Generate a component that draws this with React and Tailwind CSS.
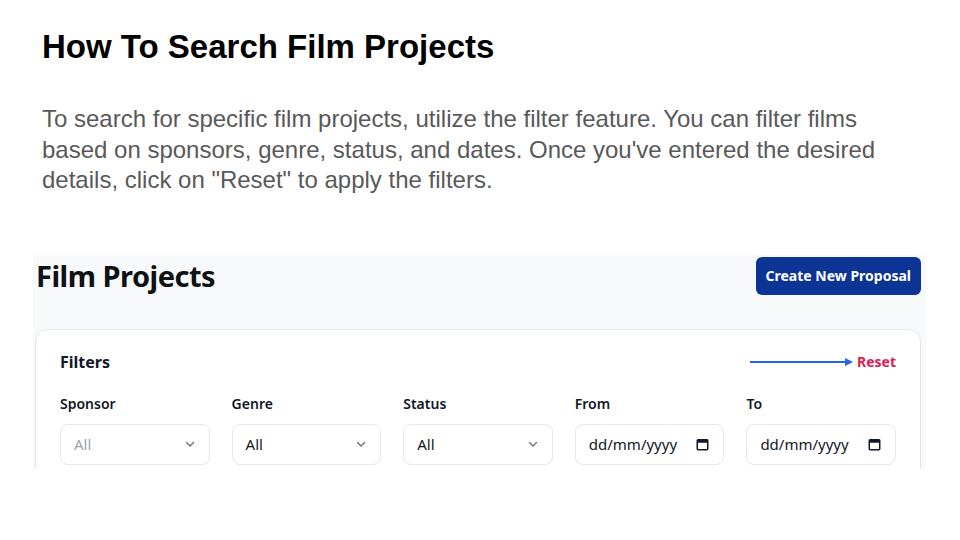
import React from "react";

const ui = { fontFamily: '"Noto Sans", "Open Sans", sans-serif' };
const slide = { fontFamily: '"Liberation Sans", Arial, sans-serif' };

function Chevron() {
  return (
    <svg width="12" height="12" viewBox="0 0 12 12" fill="none">
      <path d="M2.5 4.5 L6 8 L9.5 4.5" stroke="#6b7280" strokeWidth="1.4" strokeLinecap="round" strokeLinejoin="round" />
    </svg>
  );
}

function Calendar() {
  return (
    <svg width="13" height="13" viewBox="0 0 13 13" fill="none">
      <rect x="1.25" y="1.75" width="10.5" height="10" rx="1" stroke="#111827" strokeWidth="1.5" />
      <rect x="1.25" y="1.75" width="10.5" height="3" fill="#111827" />
    </svg>
  );
}

function SelectBox({ value, muted }) {
  return (
    <div className="h-[41px] rounded-lg border border-[#e5e7eb] bg-white flex items-center justify-between pl-[13px] pr-[13px]">
      <span className={"text-[15px] " + (muted ? "text-[#9ca3af]" : "text-[#111827]")}>{value}</span>
      <Chevron />
    </div>
  );
}

function DateBox() {
  return (
    <div className="h-[41px] rounded-lg border border-[#e5e7eb] bg-white flex items-center justify-between pl-[13px] pr-[14px]">
      <span className="text-[15px] text-[#111827]">dd/mm/yyyy</span>
      <Calendar />
    </div>
  );
}

function Field({ label, children }) {
  return (
    <div className="flex flex-col">
      <div className="text-[14px] leading-[20px] font-semibold text-[#111827] mb-[10px]">{label}</div>
      {children}
    </div>
  );
}

export default function App() {
  return (
    <div className="w-[960px] h-[540px] bg-white overflow-hidden">
      <div className="pl-[42px] pt-[27px]" style={slide}>
        <h1 className="text-[33px] leading-[40px] font-bold text-black">How To Search Film Projects</h1>
        <p className="mt-[37px] text-[24px] leading-[30.5px] text-[#595959] w-[870px]">
          To search for specific film projects, utilize the filter feature. You can filter films based on sponsors, genre, status, and dates. Once you've entered the desired details, click on "Reset" to apply the filters.
        </p>
      </div>

      <div className="ml-[33px] mt-[59px] w-[893px] h-[214px] bg-[#f8f9fb] overflow-hidden" style={ui}>
        <div className="flex items-center justify-between pl-[3px] pr-[5px] h-[42px]">
          <div className="text-[29px] font-bold text-[#0f1115] tracking-[-0.5px] leading-[36px]">Film Projects</div>
          <div className="h-[38px] px-[10px] rounded-[6px] bg-[#0b3494] text-white text-[14px] font-bold flex items-center">
            Create New Proposal
          </div>
        </div>
        <div className="ml-[2px] mt-[32px] w-[886px] bg-white border border-[#e5e7eb] rounded-xl px-6 pt-[20px] pb-6">
          <div className="flex items-center justify-between h-[24px] mb-[20px]">
            <div className="text-[16px] font-bold text-[#111827]">Filters</div>
            <div className="flex items-center gap-[3px]">
              <svg width="104" height="10" viewBox="0 0 104 10">
                <line x1="0" y1="5" x2="96" y2="5" stroke="#2563eb" strokeWidth="2" />
                <path d="M95 1 L103 5 L95 9 Z" fill="#2563eb" />
              </svg>
              <span className="text-[14px] font-bold text-[#dc1e4e]">Reset</span>
            </div>
          </div>
          <div className="grid grid-cols-5 gap-[22px]">
            <Field label="Sponsor"><SelectBox value="All" muted /></Field>
            <Field label="Genre"><SelectBox value="All" /></Field>
            <Field label="Status"><SelectBox value="All" /></Field>
            <Field label="From"><DateBox /></Field>
            <Field label="To"><DateBox /></Field>
          </div>
        </div>
      </div>
    </div>
  );
}
